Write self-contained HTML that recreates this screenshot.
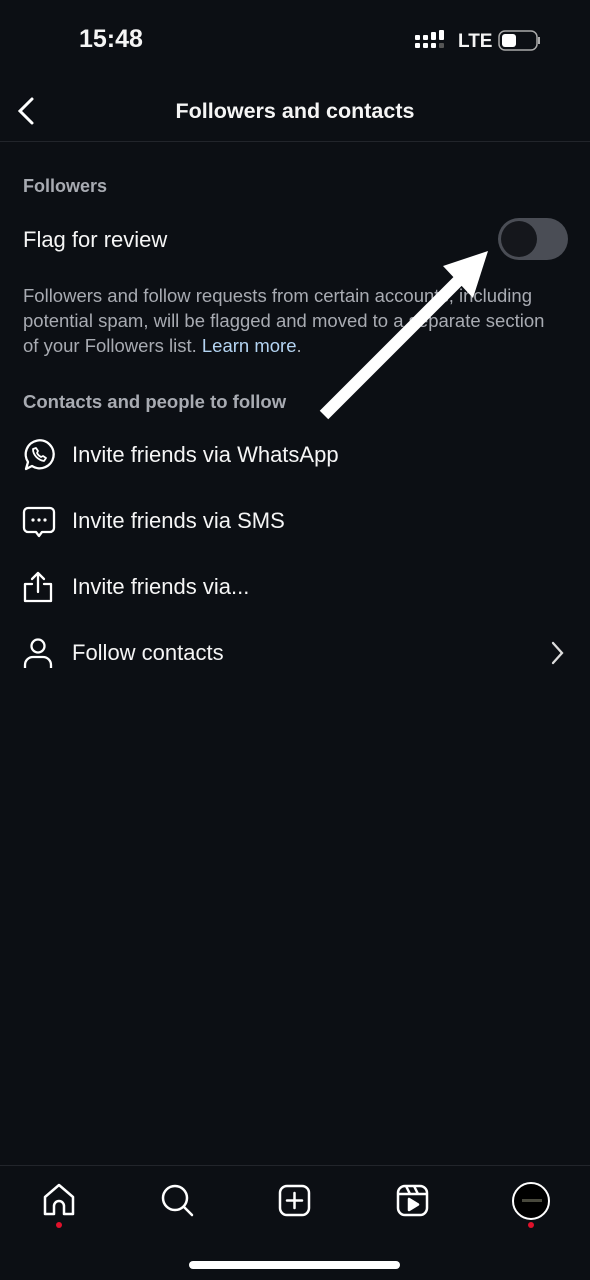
<!DOCTYPE html>
<html><head><meta charset="utf-8"><style>
*{margin:0;padding:0;box-sizing:border-box}
body{width:590px;height:1280px;background:#0c0f14;color:#f5f5f5;font-family:"Liberation Sans",sans-serif;position:relative;overflow:hidden}
.a{position:absolute}
.row{position:absolute;left:72px;font-size:22px;color:#f5f5f5}
svg{position:absolute}
</style></head><body>
<div class="a" style="left:79px;top:25px;font-size:25px;font-weight:bold">15:48</div>
<svg style="left:415px;top:30px" width="32" height="22"><g fill="#fff"><rect x="0" y="5" width="5" height="5" rx="1"/><rect x="0" y="13" width="5" height="5" rx="1"/><rect x="8" y="5" width="5" height="5" rx="1"/><rect x="8" y="13" width="5" height="5" rx="1"/><rect x="16" y="2" width="5" height="8" rx="1"/><rect x="16" y="13" width="5" height="5" rx="1"/><rect x="24" y="0" width="5" height="10" rx="1"/></g><rect x="24" y="13" width="5" height="5" rx="1" fill="#555"/></svg>
<div class="a" style="left:458px;top:31px;font-size:19px;font-weight:bold">LTE</div>
<svg style="left:498px;top:30px" width="44" height="22"><rect x="1" y="1" width="38" height="19" rx="6" fill="none" stroke="#aaa" stroke-width="1.5"/><rect x="4" y="4" width="14" height="13" rx="3" fill="#fff"/><rect x="40" y="7" width="2" height="7" fill="#aaa"/></svg>
<svg style="left:14px;top:96px" width="24" height="32"><path d="M18 3L6 15L18 27" stroke="#fff" stroke-width="3" fill="none" stroke-linecap="round"/></svg>
<div class="a" style="left:0;width:590px;top:99px;text-align:center;font-size:21.5px;font-weight:bold">Followers and contacts</div>
<div class="a" style="left:0;top:141px;width:590px;height:1px;background:#22252b"></div>
<div class="a" style="left:23px;top:176px;font-size:18px;font-weight:bold;color:#a8abb2">Followers</div>
<div class="a" style="left:23px;top:227px;font-size:22px">Flag for review</div>
<div class="a" style="left:498px;top:218px;width:70px;height:42px;border-radius:21px;background:#4a4d55"><div style="position:absolute;left:3px;top:3px;width:36px;height:36px;border-radius:18px;background:#15171c"></div></div>
<div class="a" style="left:23px;top:283px;width:540px;font-size:18.5px;line-height:25px;color:#a8abb2">Followers and follow requests from certain accounts, including potential spam, will be flagged and moved to a separate section of your Followers list. <span style="color:#b4d4f2">Learn more</span>.</div>
<div class="a" style="left:23px;top:391px;font-size:18.5px;font-weight:bold;color:#a8abb2">Contacts and people to follow</div>
<svg style="left:0;top:0" width="590" height="450"><line x1="324" y1="415" x2="458" y2="281" stroke="#fff" stroke-width="12"/><polygon points="488,251 443,266 473,298" fill="#fff"/></svg>
<svg style="left:22px;top:438px" width="34" height="34" fill="none" stroke="#fff" stroke-width="2.3" stroke-linejoin="round"><path d="M4 31l2-7A14 14 0 1 1 10 28z"/><path d="M11 11c0 6 5 11 11 12l2-3-3-2-2 1c-2-1-3-2-4-4l1-2-2-3z" stroke-width="1.8"/></svg>
<div class="row" style="top:442px">Invite friends via WhatsApp</div>
<svg style="left:22px;top:505px" width="34" height="34" fill="none" stroke="#fff" stroke-width="2.3" stroke-linejoin="round"><path d="M6 3h22a4 4 0 0 1 4 4v16a4 4 0 0 1-4 4h-8l-3 4-3-4H6a4 4 0 0 1-4-4V7a4 4 0 0 1 4-4z"/><g fill="#fff" stroke="none"><circle cx="11" cy="15" r="1.6"/><circle cx="17" cy="15" r="1.6"/><circle cx="23" cy="15" r="1.6"/></g></svg>
<div class="row" style="top:508px">Invite friends via SMS</div>
<svg style="left:22px;top:570px" width="34" height="34" fill="none" stroke="#fff" stroke-width="2.3" stroke-linecap="round" stroke-linejoin="round"><path d="M10 14H3v17h26V14h-7"/><path d="M16 22V3M10 9l6-6 6 6"/></svg>
<div class="row" style="top:574px">Invite friends via...</div>
<svg style="left:22px;top:636px" width="34" height="34" fill="none" stroke="#fff" stroke-width="2.3"><circle cx="16" cy="10" r="6.5"/><path d="M3 32v-3a8 8 0 0 1 8-8h10a8 8 0 0 1 8 8v3"/></svg>
<div class="row" style="top:640px">Follow contacts</div>
<svg style="left:548px;top:640px" width="20" height="26"><path d="M5 3l9 10-9 10" stroke="#ddd" stroke-width="2.3" fill="none" stroke-linecap="round"/></svg>
<div class="a" style="left:0;top:1165px;width:590px;height:1px;background:#22252b"></div>
<svg style="left:42px;top:1183px" width="34" height="34" fill="none" stroke="#fff" stroke-width="2.5" stroke-linejoin="round"><path d="M3 31V14L17 2l14 12v17h-9v-8a5 5 0 0 0-10 0v8z"/></svg>
<div class="a" style="left:56px;top:1222px;width:6px;height:6px;border-radius:3px;background:#e0112b"></div>
<svg style="left:160px;top:1183px" width="36" height="36" fill="none" stroke="#fff" stroke-width="2.5" stroke-linecap="round"><circle cx="15" cy="15" r="12"/><path d="M24 24l8 8"/></svg>
<svg style="left:278px;top:1184px" width="34" height="34" fill="none" stroke="#fff" stroke-width="2.5" stroke-linecap="round"><rect x="2" y="2" width="29" height="29" rx="7"/><path d="M16.5 9v15M9 16.5h15"/></svg>
<svg style="left:396px;top:1184px" width="34" height="34" fill="none" stroke="#fff" stroke-width="2.5" stroke-linejoin="round"><rect x="2" y="2" width="29" height="29" rx="7"/><path d="M2 10h29M10 2l4 8M18 2l4 8"/><path d="M13 15v11l9-5.5z" fill="#fff"/></svg>
<div class="a" style="left:512px;top:1182px;width:38px;height:38px;border-radius:19px;border:2px solid #fff;background:#000"><div style="position:absolute;left:8px;top:15px;width:20px;height:3px;background:#665;opacity:.7"></div></div>
<div class="a" style="left:528px;top:1222px;width:6px;height:6px;border-radius:3px;background:#e0112b"></div>
<div class="a" style="left:189px;top:1261px;width:211px;height:8px;border-radius:4px;background:#fff"></div>
</body></html>
